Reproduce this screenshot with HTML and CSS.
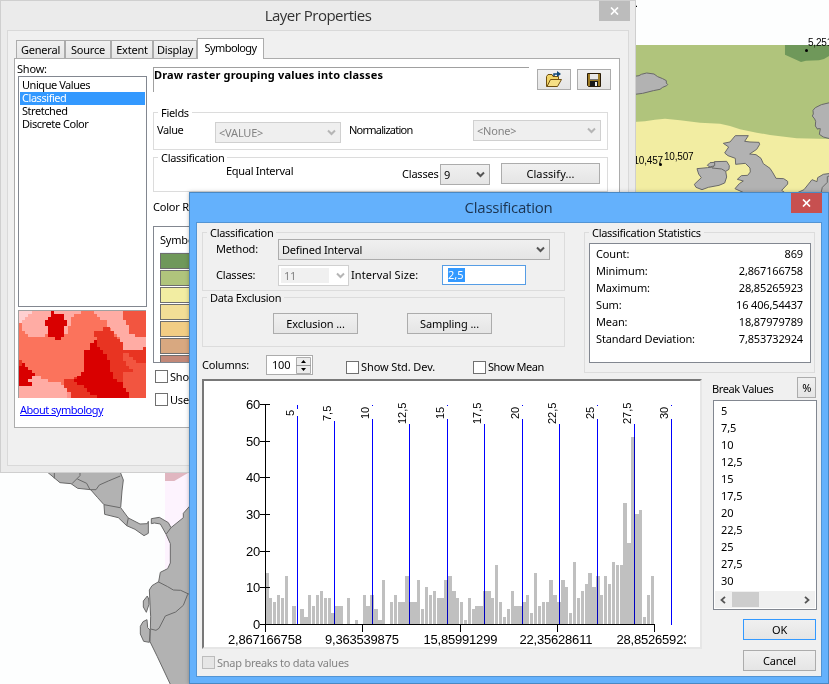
FILE: index.html
```html
<!DOCTYPE html>
<html lang="en">
<head>
<meta charset="utf-8">
<title>Layer Properties</title>
<link rel="stylesheet" href="styles.css">
</head>
<body>
<svg class="map" width="829" height="684" viewBox="0 0 829 684">
  <g transform="scale(.33333)" stroke-width="3" stroke-linejoin="round">
    <g transform="translate(1890 0)">
      <path fill="#b0c47c" d="M0 135H600V420H0z"/>
      <path fill="#6f985a" d="M465 135H600V166L582 177 567 181 528 182 513 186 495 178 480 171 465 164z"/>
      <path fill="#f2eda2" d="M0 367L45 364 75 359 105 356 150 361 210 368 270 371 300 378 330 388 380 398 420 405 500 415 600 417V580H0z"/>
      <path fill="#000" d="M18 17h3v4h-3z"/>
      <g fill="#b2b2b2" stroke="#686868">
        <path d="M0 231L27 227 34 223 50 219 72 222 83 230 98 236 109 242 109 249 113 254 110 257 98 262 90 268 70 272 38 280 0 285z"/>
        <path d="M603 307L574 314 556 323 549 331 550 342 547 348 554 357 557 364 556 378 563 388 563 386 571 386 568 403 580 411 603 417z"/>
        <path d="M316 407L355 407 344 424 360 426 387 427 389 433 380 448 359 462 378 464 393 475 400 491 420 505 429 519 438 535 461 536 473 544 473 552 455 571 470 582 350 582 315 566 328 551 340 543 322 538 334 527 353 526 361 516 360 504 346 490 317 493 316 475 294 467 284 459 296 441 280 430 300 426z"/>
        <path d="M201 506L232 503 250 501 253 485 290 484 298 497 297 508 287 514 290 531 284 549 267 556 235 562 216 569 198 562 193 553 214 533 206 522z"/>
        <path d="M232 496L240 488 254 487 254 497 240 501zM246 504L275 507 287 514" />
        <path d="M498 580L522 569 546 539 561 545 563 533 580 523 603 520V585z"/>
        <path fill="none" d="M602 526L592 530 592 547 577 562 573 580"/>
      </g>
    </g>
    <g transform="translate(120 1395)">
      <path fill="#fdf3fe" d="M375 20H450V320H375z"/>
      <path fill="#e0b6c0" d="M375 20H450L403 48H375z"/>
      <g fill="#b2b2b2" stroke="#686868">
        <path d="M23 22L60 53 93 56 113 70 152 74 172 97 192 119 194 148 235 158 260 182 285 193 312 212 325 205 325 169 322 176 300 177 265 159 242 128 246 78 250 45 241 22z"/>
        <path fill="none" d="M43 22V40M120 22V32L96 56M112 42L140 55 150 74H168L178 60 205 48 241 33M192 119L240 128M265 159L260 183"/>
        <path d="M334 176V161L358 157 385 173 393 188 430 158 430 145 452 120V660H392L352 575 330 530 332 455 328 375 336 362 356 350 361 322 383 311 391 294 391 236 379 209 361 177 343 174z"/>
        <path fill="none" d="M379 207L393 188M354 350L383 365 400 375 422 376 452 390M443 388L430 421 407 441 376 453 357 490 348 496 332 492"/>
        <path d="M322 393L310 408 310 426 319 442 327 418 326 402zM321 464L309 470 301 484 301 507 311 529 328 532 330 495 323 488z"/>
      </g>
    </g>
  </g>
  <circle cx="806.5" cy="50.5" r="1.5"/><circle cx="660.5" cy="164.5" r="1.5"/>
  <g class="map-label"><text x="808" y="46">5,251</text><text x="633.500" y="164">10,457</text><text x="664" y="160">10,507</text></g>
</svg>

<section class="window props">
  <header class="titlebar"><h1>Layer Properties</h1><button class="close"><svg width="9" height="8" viewBox="0 0 9 8"><path d="M1 .5L8 7.500M8 .5L1 7.500"/></svg></button></header>
  <div class="client">
    <nav class="tabs"><span class="t1">General</span><span class="t2">Source</span><span class="t3">Extent</span><span class="t4">Display</span><span class="t5 active">Symbology</span></nav>
    <div class="page">
      <div class="side">
        <div class="side-label">Show:</div>
        <ul class="show-list"><li>Unique Values</li><li class="sel">Classified</li><li>Stretched</li><li>Discrete Color</li></ul>
        <svg class="preview" width="128" height="88" viewBox="54 60 384 264" shape-rendering="crispEdges">
          <path fill="#fb735c" d="M54 60H438V324H54z"/>
          <path fill="#ffaca4" d="M57 63H243V72H222V81H213V108H204V131H135V140H84V131H75V122H66V100H57z"/>
          <path fill="#ffd0d0" d="M57 63H95V72H84V81H75V90H66V100H57z"/>
          <path fill="#d90000" d="M153 63H162V72H192V90H201V108H192V140H183V150H165V140H144V108H135V90H144V81H153z"/>
          <path fill="#ffaca4" d="M282 63H438V180H369V157H360V140H351V131H342V122H333V113H321V90H300V81H291V72H282z"/>
          <path fill="#f25540" d="M369 63H438V140H404V131H387V104H378V90H369z"/>
          <path fill="#e83422" d="M282 122H309V111H330V122H342V140H351V148H360V157H369V180H429V171H438V324H213V305H201V295H192V266H222V260H282V150H291V140H282z"/>
          <path fill="#f25540" d="M369 189H387V201H400V210H408V218H438V324H387V305H378V295H369V247H398V237H387V228H378V213H369z"/>
          <path fill="#d90000" d="M282 150H291V171H300V180H309V192H321V210H330V247H339V266H351V275H369V295H378V305H387V324H291V314H270V305H261V295H252V286H231V275H222V266H231V257H243V247H252V180H270V160H282z"/>
          <path fill="#e83422" d="M57 210H66V228H57z"/>
          <path fill="#d90000" d="M57 228H66V219H75V231H84V240H95V250H104V257H95V266H84V275H95V288H57z"/>
          <path fill="#ffaca4" d="M57 288H95V275H84V266H95V257H122V266H144V275H183V286H192V295H201V305H213V324H57z"/>
          <path fill="#ff9088" d="M201 305H213V324H201z"/>
          <path fill="#a0a0a0" d="M54 60H438V63H57V324H54z"/>
        </svg>
        <a class="about" href="#">About symbology</a>
      </div>
      <div class="main">
        <div class="top-row">
          <div class="desc">Draw raster grouping values into classes</div>
          <button class="tool"><svg width="18" height="17" viewBox="0 0 18 17"><path fill="#f2d568" stroke="#705010" d="M1.500 15.500V5.500L3 3.500H7L8 5.500H13.500V8.500L11.500 15.500z"/><path fill="#f6df85" stroke="#705010" d="M2 15.500L5.500 8.500H16.500L12.500 15.500z"/><path fill="none" stroke="#104878" stroke-width="1.500" d="M9 5V3H13"/><path fill="#104878" d="M12 0L16 3L12 6z"/></svg></button>
          <button class="tool"><svg width="14" height="14" viewBox="0 0 14 14"><path fill="#9c7a24" stroke="#2a1c08" d="M.5.5H13.500V13.500H1.500L.5 12.500z"/><path fill="#e8e8e8" d="M3 1H11V6H3z"/><path fill="#777" d="M3 6H11V7H3z"/><path fill="#181818" d="M3 8H11V13H3z"/><path fill="#eee" d="M8 9H10V13H8z"/></svg></button>
        </div>
        <fieldset class="fields"><legend>Fields</legend>
          <div class="row">
            <label class="value">Value</label>
            <div class="combo disabled c-value">&lt;VALUE&gt;<svg class="arrow" viewBox="0 0 9 7"><path d="M1 1.500L4.500 5L8 1.500"/></svg></div>
            <label class="norm">Normalization</label>
            <div class="combo disabled c-none">&lt;None&gt;<svg class="arrow" viewBox="0 0 9 7"><path d="M1 1.500L4.500 5L8 1.500"/></svg></div>
          </div>
        </fieldset>
        <fieldset class="classif"><legend>Classification</legend>
          <div class="row">
            <label class="equal">Equal Interval</label><label class="cls">Classes</label>
            <div class="combo c-nine">9<svg class="arrow" viewBox="0 0 9 7"><path d="M1 1.500L4.500 5L8 1.500"/></svg></div>
            <button class="btn classify">Classify...</button>
          </div>
        </fieldset>
        <div class="ramp">Color Ra</div>
        <div class="symbols"><div class="symbols-head">Symbo</div><i class="s1"></i><i class="s2"></i><i class="s3"></i><i class="s4"></i><i class="s5"></i><i class="s6"></i><i class="s7"></i></div>
        <label class="check first"><b></b>Sho</label>
        <label class="check second"><b></b>Use</label>
      </div>
    </div>
  </div>
</section>

<section class="window dialog">
  <header class="titlebar"><h1>Classification</h1><button class="close"><svg width="9" height="8" viewBox="0 0 9 8"><path d="M1 .5L8 7.500M8 .5L1 7.500"/></svg></button></header>
  <div class="client">
    <div class="upper">
      <div class="settings">
        <fieldset class="method"><legend>Classification</legend>
          <div class="row m1"><label>Method:</label><div class="combo c-method">Defined Interval<svg class="arrow" viewBox="0 0 9 7"><path d="M1 1.500L4.500 5L8 1.500"/></svg></div></div>
          <div class="row m2"><label>Classes:</label><div class="combo disabled c-eleven"><span>11</span><svg class="arrow" viewBox="0 0 9 7"><path d="M1 1.500L4.500 5L8 1.500"/></svg></div><label class="size">Interval Size:</label><div class="input"><mark>2,5</mark></div></div>
        </fieldset>
        <fieldset class="exclusion"><legend>Data Exclusion</legend>
          <div class="row"><button class="btn">Exclusion ...</button><button class="btn">Sampling ...</button></div>
        </fieldset>
        <div class="options">
          <label class="cols">Columns:</label>
          <div class="spinner"><span>100</span><svg width="15" height="17" viewBox="0 0 15 17"><path fill="#ececec" stroke="#adadad" d="M.5 .5H14.500V16.500H.5z"/><path fill="#999" d="M0 8H15V9H0z"/><path d="M5 6L7.500 3L10 6zM5 11L7.500 14L10 11z"/></svg></div>
          <label class="check std"><b></b>Show Std. Dev.</label>
          <label class="check mean"><b></b>Show Mean</label>
        </div>
      </div>
      <fieldset class="stats"><legend>Classification Statistics</legend>
        <dl>
          <dt>Count:</dt><dd>869</dd><dt>Minimum:</dt><dd>2,867166758</dd><dt>Maximum:</dt><dd>28,85265923</dd>
          <dt>Sum:</dt><dd>16 406,54437</dd><dt>Mean:</dt><dd>18,87979789</dd><dt>Standard Deviation:</dt><dd>7,853732924</dd>
        </dl>
      </fieldset>
    </div>
    <div class="lower">
      <div class="left">
        <div class="chart"><svg id="histogram" width="496" height="266" viewBox="204 381 496 266"></svg></div>
        <label class="check snap"><b></b>Snap breaks to data values</label>
      </div>
      <div class="right">
        <div class="break-head"><span>Break Values</span><button class="btn pct">%</button></div>
        <div class="breaks">
          <ul><li>5</li><li>7,5</li><li>10</li><li>12,5</li><li>15</li><li>17,5</li><li>20</li><li>22,5</li><li>25</li><li>27,5</li><li>30</li></ul>
          <div class="scroll"><svg viewBox="0 0 6 8" width="6" height="8"><path d="M5 .8L1.500 4L5 7.200"/></svg><i></i><svg viewBox="0 0 6 8" width="6" height="8"><path d="M1 .8L4.500 4L1 7.200"/></svg></div>
        </div>
        <button class="btn ok">OK</button>
        <button class="btn cancel">Cancel</button>
      </div>
    </div>
  </div>
</section>
<script src="chart.js"></script>
</body>
</html>
```
FILE: styles.css
```css
* { box-sizing: border-box; }
body { margin: 0; width: 829px; height: 684px; overflow: hidden; position: relative; background: #fdfefe; font: 11px/13px "Noto Sans", "Open Sans", sans-serif; color: #000; letter-spacing: -0.2px; }
button { font: inherit; letter-spacing: inherit; color: inherit; padding: 0; margin: 0; }
ul, dl, dd { margin: 0; padding: 0; list-style: none; }
label, legend, .combo, button, li { white-space: nowrap; }
.map { position: absolute; left: 0; top: 0; }
.map-label { font: 10px "Liberation Sans", sans-serif; letter-spacing: -0.2px; }

.window { position: absolute; border: 1px solid #cfcfcf; background: #ebebeb; }
.props { left: 0; top: 0; width: 636px; height: 473px; padding: 0 6px; }
.dialog { left: 189px; top: 192px; width: 640px; height: 492px; padding: 0 6px; background: #64b1fc; border-color: #4a88c2; box-shadow: 0 0 4px #0004; }
.titlebar { height: 29px; position: relative; display: flex; justify-content: center; }
.titlebar h1 { margin: 0; font: 15px/29px "Open Sans", "Noto Sans", sans-serif; letter-spacing: -0.5px; color: #333; }
.dialog h1 { color: #1c3450; letter-spacing: -0.25px; margin-right: 1px; }
.close { position: absolute; right: -1px; top: 0; width: 31px; height: 20px; border: 0; background: #bcbcbc; display: flex; align-items: center; justify-content: center; }
.dialog .close { background: #c75050; right: 0; }
.close path { stroke: #fff; stroke-width: 1.7; }
.client { background: #f0f0f0; border: 1px solid #d9d9d9; }
.props .client { height: 436px; padding: 7px 6px 0; }
.dialog .client { height: 455px; border-color: #5394d3; padding: 3px 4px 0 5px; }

.tabs { display: flex; height: 20px; align-items: flex-end; padding-left: 2px; }
.tabs span { height: 18px; border: 1px solid #acacac; border-bottom: 0; background: linear-gradient(#f0f0f0, #e6e6e6); text-align: center; line-height: 17px; }
.t1 { width: 49px; } .t2 { width: 46px; } .t3 { width: 42px; } .t4 { width: 44px; }
.tabs .active { width: 67px; height: 21px; margin-bottom: -1px; background: #fff; position: relative; letter-spacing: -0.6px; }
.page { width: 606px; height: 370px; border: 1px solid #acacac; background: #fff; display: flex; padding-left: 3px; }
.side { width: 129px; margin-right: 6px; }
.side-label { height: 17px; padding-top: 3px; margin-left: -1px; }
.show-list { height: 231px; border: 1px solid #828790; padding: 2px 1px; letter-spacing: -0.45px; }
.show-list li { padding-left: 2px; height: 13px; line-height: 11px; }
.show-list .sel { background: #3399ff; color: #fff; }
.preview { display: block; margin-top: 3px; }
.about { display: block; margin: 5px 0 0 2px; color: #00f; letter-spacing: -0.5px; }
.main { width: 460px; }
.top-row { display: flex; padding-top: 8px; height: 47px; align-items: flex-start; }
.desc { width: 376px; height: 25px; border: 1px solid #a0a0a0; border-width: 1px 0 0 1px; font-weight: bold; line-height: 13px; letter-spacing: 0.17px; }
.tool { width: 34px; height: 21px; margin: 2px 0 0 8px; border: 1px solid #acacac; background: linear-gradient(#f0f0f0, #e5e5e5); display: flex; align-items: center; justify-content: center; }
.tool + .tool { margin-left: 6px; }

fieldset { margin: 0; padding: 0; border: 1px solid #dcdcdc; min-width: 0; }
legend { padding: 0 3px; margin-left: 4px; height: 13px; line-height: 13px; letter-spacing: -0.3px; }
.row { display: flex; align-items: flex-start; }
.fields, .classif { width: 455px; }
.fields { height: 44px; }
.fields .value { width: 58px; margin: 4px 0 0 3px; letter-spacing: -0.4px; }
.fields .norm { width: 124px; margin: 4px 0 0 8px; letter-spacing: -0.75px; }
.c-value { width: 126px; margin-top: 3px; }
.c-none { width: 128px; margin-top: 1px; }
.classif { height: 41px; margin-top: 1px; }
.equal { width: 176px; margin: 0 0 0 72px; letter-spacing: -0.3px; }
.cls { width: 38px; margin-top: 3px; }
.c-nine { width: 50px; margin-top: 0; }
.classify { width: 99px; margin: -1px 0 0 11px; letter-spacing: 0.1px; }
.combo { height: 21px; border: 1px solid #acacac; background: linear-gradient(#f0f0f0, #e5e5e5); display: flex; align-items: center; justify-content: space-between; padding: 0 4px 0 3px; }
.disabled { color: #838383; border-color: #d0d0d0; background: #efefef; }
.arrow { width: 9px; height: 7px; flex: none; }
.arrow path { fill: none; stroke: #555; stroke-width: 2; }
.disabled .arrow path { stroke: #b5b5b5; }
.btn { height: 21px; border: 1px solid #acacac; background: linear-gradient(#f0f0f0, #e5e5e5); text-align: center; line-height: 19px; }
.ramp { height: 34px; padding-top: 8px; white-space: nowrap; }
.symbols { height: 137px; border: 1px solid #828790; padding: 1px 1px 0 6px; overflow: hidden; display: flex; flex-direction: column; }
.symbols-head { height: 25px; line-height: 24px; border-bottom: 1px solid #edf2fa; flex: none; }
.symbols i { height: 16px; margin-bottom: 1px; border: 1px solid #6e6e6e; flex: none; }
.s1 { background: #6f985a; } .s2 { background: #b0c47c; } .s3 { background: #f2eda2; } .s4 { background: #f2de96; }
.s5 { background: #f2cd84; } .s6 { background: #d8a880; } .s7 { background: #c28878; }
.check { display: flex; align-items: center; height: 13px; }
.check b { width: 13px; height: 13px; border: 1px solid #707070; background: #fff; margin-right: 2px; flex: none; }
.first { margin: 7px 0 0 2px; } .second { margin: 10px 0 0 2px; }

.upper { display: flex; height: 152px; }
.settings { width: 363px; margin-right: 19px; }
.method { height: 65px; }
.method label { width: 62px; margin-left: 13px; }
.m1 { height: 26px; }
.m1 label, .m2 label { margin-top: 3px; }
.c-method { width: 272px; }
.c-eleven { width: 71px; background: #fff; padding: 0 3px 0 2px; }
.c-eleven span { width: 48px; height: 15px; line-height: 15px; padding-left: 3px; background: #f0f0f0; }
.method .size { width: 91px; margin: 3px 0 0 2px; letter-spacing: 0.1px; }
.input { width: 84px; height: 20px; border: 1px solid #569de5; background: #fff; padding: 2px 5px; }
mark { background: #3399ff; color: #fff; display: inline-block; height: 14px; line-height: 14px; width: 17px; white-space: nowrap; letter-spacing: 0; }
.exclusion { height: 56px; }
.exclusion .row { padding: 9px 0 0 70px; gap: 49px; }
.exclusion .btn { width: 85px; letter-spacing: -0.1px; }
.options { display: flex; align-items: flex-start; padding-top: 8px; height: 31px; }
.cols { width: 64px; margin: 3px 0 0 0; }
.spinner { width: 47px; height: 20px; border: 1px solid #acacac; background: #fff; display: flex; justify-content: space-between; padding: 0 1px 0 5px; align-items: center; }
.spinner span { padding-bottom: 2px; }
.std { width: 127px; margin: 6px 0 0 33px; letter-spacing: -0.1px; } .mean { margin-top: 6px; letter-spacing: -0.45px; }
.options .check { line-height: 11px; align-items: flex-start; }
.stats { width: 231px; height: 147px; }
.stats dl { margin: 4px 3px 0 4px; height: 120px; border: 1px solid #828790; background: #fff; padding: 1px 7px 0 6px; display: grid; grid-template-columns: auto auto; grid-auto-rows: 17px; align-content: start; line-height: 17px; letter-spacing: -0.15px; }
.stats dd { text-align: right; }
.lower { display: flex; padding-top: 1px; }
.left { width: 500px; margin-right: 10px; }
.chart { width: 500px; height: 270px; border: 2px solid #a0a0a0; border-color: #787878 #e6e6e6 #e6e6e6 #787878; background: #fff; }
.chart svg { display: block; }
.axis text { font: 13px "Liberation Sans", sans-serif; letter-spacing: -0.2px; }
.marks text { font: 11px "Liberation Sans", sans-serif; letter-spacing: 0; }
.axis path { stroke: #000; shape-rendering: crispEdges; fill: none; }
.marks path { stroke: #00f; shape-rendering: crispEdges; }
.bars { fill: #c0c0c0; shape-rendering: crispEdges; mix-blend-mode: multiply; }
.snap { margin-top: 7px; color: #838383; letter-spacing: -0.25px; }
.snap b { border-color: #bcbcbc; background: #e6e6e6; }
.right { width: 105px; margin-top: -2px; display: flex; flex-direction: column; align-items: flex-end; }
.break-head { width: 105px; display: flex; justify-content: space-between; height: 23px; align-items: flex-start; padding-right: 1px; letter-spacing: -0.4px; }
.break-head span { margin-top: 5px; }
.pct { width: 19px; }
.breaks { width: 104px; height: 210px; border: 1px solid #828790; background: #fff; padding: 1px 1px 1px; display: flex; flex-direction: column; justify-content: space-between; }
.breaks li { height: 17px; line-height: 17px; padding-left: 6px; letter-spacing: -0.1px; }
.scroll { height: 17px; background: #f0f0f0; display: flex; align-items: center; padding: 0 5px; }
.scroll i { width: 27px; height: 15px; background: #cdcdcd; margin: 0 auto 0 6px; }
.scroll path { fill: none; stroke: #555; stroke-width: 1.8; }
.ok, .cancel { width: 73px; margin: 9px 1px 0 0; }
.ok { border-color: #3399ff; } .cancel { margin-top: 10px; }
```
FILE: chart.js
```js
const counts = [14,7,6,8,7,13,0,5,0,4,2,8,5,8,9,7,7,3,5,5,0,7,0,1,0,8,5,8,4,1,12,0,6,8,6,6,13,6,6,12,
  4,10,8,9,7,7,12,13,9,7,6,1,7,4,5,5,9,9,7,16,6,2,4,9,5,5,6,8,3,14,5,6,6,12,8,6,12,10,3,17,7,9,11,14,10,
  13,8,13,11,17,16,16,33,22,51,30,31,2,8,13];
const breaks = [["5",297,416],["7,5",334,421],["10",372,419],["12,5",409,424],["15",447,419],["17,5",484,424],
  ["20",522,419],["22,5",559,424],["25",597,419],["27,5",634,424],["30",671,419]];
const base = 624;
const unit = 11 / 3;

let marks = "";
for (const [label, x, top] of breaks) {
  const dash = label === "5" ? "M" + (x + .5) + " 405v4" : label.includes(",") ? "" : "M" + (x + .5) + " 405v1";
  marks += `<path d="M${x + .5} ${top}V${base + 1}${dash}"/><text transform="translate(${x - 3} ${top}) rotate(-90)">${label}</text>`;
}

let bars = "";
counts.forEach((n, i) => {
  const x = 265.7 + 3.894 * i;
  const left = Math.floor(x);
  const width = Math.floor(x - left + 3.4);
  const h = Math.round(n * unit);
  if (n) bars += `<rect x="${left}" y="${base - h}" width="${width}" height="${h}"/>`;
});

let axis = '<path d="M265.5 404V632M265 624.5H655M362.500 624V632M460.500 624V632M557.500 624V632M654.500 624V632"/>';
for (let v = 0; v <= 60; v += 10) {
  const y = Math.round(base - v * unit);
  axis += `<path d="M260 ${y + .5}H270"/><text x="260" y="${y + 5}" text-anchor="end">${v}</text>`;
}
[["2,867166758",228],["9,363539875",325],["15,85991299",423.5],["22,35628611",519.5],["28,85265923",616.5]].forEach(([t, x], i) => {
  axis += `<text x="${x}" y="644"${i === 4 ? ' clip-path="url(#edge)"' : ""}>${t}</text>`;
});

document.getElementById("histogram").innerHTML =
  `<defs><clipPath id="edge"><path d="M600 630H686V650H600z"/></clipPath></defs>
   <g class="marks">${marks}</g><g class="bars">${bars}</g><g class="axis">${axis}</g>`;
```
